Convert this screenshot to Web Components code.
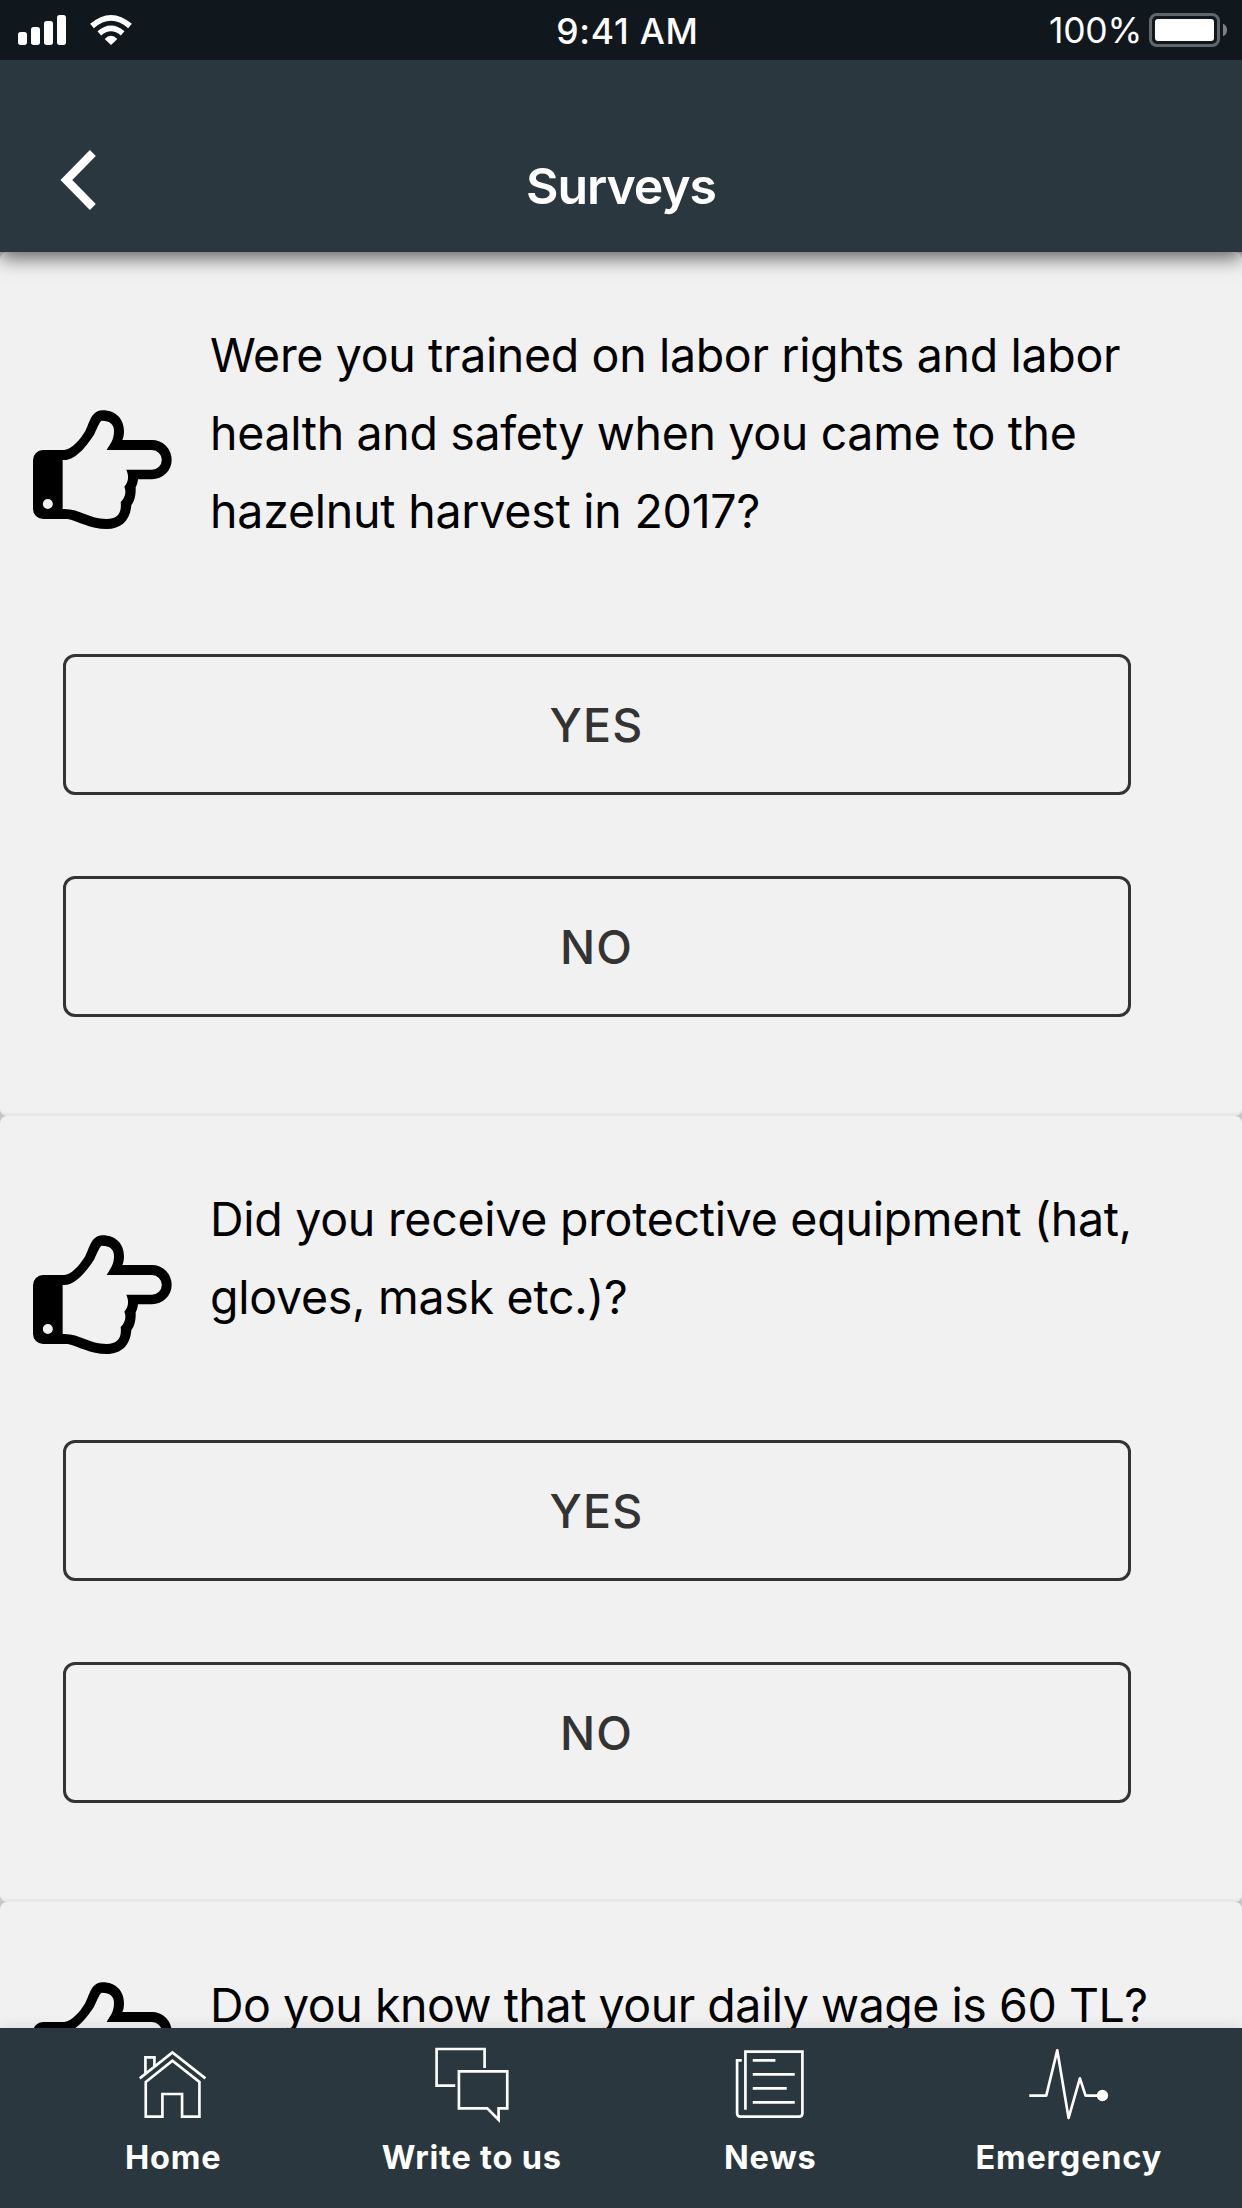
<!DOCTYPE html>
<html lang="en">
<head>
<meta charset="utf-8">
<title>Surveys</title>
<style>
html,body{margin:0;height:100%;overflow:hidden;background:#f1f1f1}
body{font-family:Inter,"Liberation Sans",sans-serif}
</style>
</head>
<body>
<survey-app>
  <status-bar slot="top"></status-bar>
  <nav-header slot="top">Surveys</nav-header>
  <survey-card style="--track:-.34px">Were you trained on labor rights and labor<br>health and safety when you came to the<br><span style="letter-spacing:-.23px">hazelnut harvest in 2017?</span>
    <answer-button slot="answer">YES</answer-button>
    <answer-button slot="answer">NO</answer-button>
  </survey-card>
  <survey-card style="--track:-.27px">Did you receive protective equipment (hat,<br>gloves, mask etc.)?
    <answer-button slot="answer">YES</answer-button>
    <answer-button slot="answer">NO</answer-button>
  </survey-card>
  <survey-card style="--track:-.47px">Do you know that your daily wage is 60 TL?</survey-card>
  <tab-bar slot="bottom">
    <tab-item icon="home">Home</tab-item>
    <tab-item icon="write">Write to us</tab-item>
    <tab-item icon="news">News</tab-item>
    <tab-item icon="pulse">Emergency</tab-item>
  </tab-bar>
</survey-app>
<script>
const define = (name, html) => customElements.define(name, class extends HTMLElement {
  constructor() {
    super();
    this.attachShadow({ mode: 'open' }).innerHTML = html;
  }
});

define('survey-app', `
<style>
:host{display:flex;flex-direction:column;width:1242px;height:2208px;overflow:hidden}
header,footer{flex:none;z-index:1}
header{box-shadow:0 6px 18px rgba(0,0,0,.6)}
footer{box-shadow:0 -3px 12px rgba(0,0,0,.08)}
main{flex:1;min-height:0;overflow:hidden;background:#c6c6c6}
</style>
<header><slot name="top"></slot></header>
<main><slot></slot></main>
<footer><slot name="bottom"></slot></footer>`);

define('status-bar', `
<style>
:host{display:flex;align-items:center;height:60px;background:#10181e;color:#fff;font-size:35.5px;line-height:60px}
div{flex:1;display:flex;align-items:center}
.time{flex:none;font-weight:500;letter-spacing:.75px;padding:2px 0 0 13px;height:58px}
.right{justify-content:flex-end}
.pct{padding-top:2px;letter-spacing:-.3px;margin-right:-4px}
svg{display:block}
</style>
<div><svg width="140" height="60" viewBox="0 0 420 180" fill="#fff">
<rect x="54" y="96" width="27" height="39" rx="8"/><rect x="93" y="81" width="27" height="54" rx="8"/><rect x="132" y="63" width="27" height="72" rx="8"/><rect x="171" y="45" width="27" height="90" rx="8"/>
<path d="M333 135L314 117Q333 98 352 117Z"/>
<path d="M298 100Q333 70 368 100M276 78Q333 29 390 78" fill="none" stroke="#fff" stroke-width="17"/>
</svg></div>
<span class="time">9:41 AM</span>
<div class="right"><span class="pct">100%</span><svg width="104" height="60" viewBox="0 0 312 180">
<rect x="37.500" y="43.500" width="204" height="93" rx="19" fill="none" stroke="#5f676d" stroke-width="9"/>
<rect x="51" y="57" width="177" height="66" rx="9" fill="#fff"/>
<path d="M255 71Q267 76 267 90T255 109Z" fill="#7b8287"/></svg></div>`);

define('nav-header', `
<style>
:host{display:grid;grid-template-columns:1fr auto 1fr;align-items:start;height:192px;background:#2b373f;color:#fff}
svg{display:block;margin:85px 0 0 55px}
h1{margin:96px 0 0;font-size:50px;line-height:60px;font-weight:600;letter-spacing:-1.1px}
</style>
<svg width="45" height="70" viewBox="165 435 135 210"><path d="M278.500 459L199 540L278.500 621" fill="none" stroke="#fff" stroke-width="25"/></svg>
<h1><slot></slot></h1>`);

define('pointing-hand', `
<style>
:host{display:block;width:138px;height:0}
svg{display:block;margin-top:-23px;overflow:visible}
</style>
<svg width="138.333" height="119" viewBox="99 90 415 357"><path fill-rule="evenodd" d="M129 210H193C215 208 240 180 256 153C268 132 273 92 306 91C345 90 372 115 372 153C372 165 370 175 367 180H456A58.500 58.500 0 0 1 456 298H414C413 308 411 315 407 322C408 345 403 365 394 375C391 420 365 447 320 447C270 447 235 424 203 417H129A30 30 0 0 1 99 387V240A30 30 0 0 1 129 210ZM188 240V387C240 385 265 417 320 417C352 417 366 400 362 366C373 355 381 338 373 320C385 305 388 290 379 269H456A29.500 29.500 0 0 0 456 210H320C330 192 342 180 342 153C342 133 330 122 306 122C300 122 295 137 282 164C265 190 230 240 193 240ZM158.500 372A15 15 0 1 0 128.500 372A15 15 0 1 0 158.500 372Z"/></svg>`);

define('answer-button', `
<style>
:host{display:block}
button{display:block;box-sizing:border-box;width:100%;height:141px;padding:2px 1px 0 0;border:3px solid #333;border-radius:12px;background:none;color:#333;font:500 46.500px/133px Inter,"Liberation Sans",sans-serif;letter-spacing:1.1px}
</style>
<button><slot></slot></button>`);

define('survey-card', `
<style>
:host{display:block;box-sizing:border-box;padding:64px 0 96px;background:#f1f1f1;border-bottom:3px solid #e8e8e8;border-radius:7px}
.question{display:flex;align-items:center;gap:39px;padding-left:33px}
p{margin:0;font-size:46.500px;line-height:78px;color:#000;white-space:nowrap;letter-spacing:var(--track,0)}
.answers{display:grid;gap:81px;margin:104px 111px 0 63px}
</style>
<div class="question"><pointing-hand></pointing-hand><p><slot></slot></p></div>
<div class="answers"><slot name="answer"></slot></div>`);

define('tab-bar', `
<style>
:host{display:grid;grid-template-columns:repeat(4,1fr);box-sizing:border-box;height:180px;padding:12px 24px 0;background:#2b373f;color:#fff}
</style><slot></slot>`);

const icons = {
  home: ['384.750 240', '<path d="M420 355L518 277L617 355M437 339V292H464V318M438 366L518 302L599 366V470H547V402H488V470H438Z"/>'],
  write: ['230.250 60', '<path d="M403 144V87H259V197H315M326 154H471V265H445V299L411 265H326Z"/>'],
  news: ['105.750 60', '<path d="M167 269V95H338V280Q338 290 328 290H153Q142 290 142 280V121H156M189 121H257M189 163H315M189 205H291M189 247H315"/>'],
  pulse: ['221.250 60', '<path stroke-linejoin="round" d="M237 227H288L321 91L355 294L389 175L406 227H450"/><circle cx="456.500" cy="226.500" r="17" fill="#fff" stroke="none"/>']
};
customElements.define('tab-item', class extends HTMLElement {
  connectedCallback() {
    if (this.shadowRoot) return;
    const [origin, shape] = icons[this.getAttribute('icon')];
    this.attachShadow({ mode: 'open' }).innerHTML = `
<style>
:host{display:flex;flex-direction:column;align-items:center;font-size:32.500px;line-height:40px;font-weight:700;letter-spacing:.8px;white-space:nowrap}
svg{display:block;margin-bottom:8px}
</style>
<svg width="90" height="90" viewBox="${origin} 270 270" fill="none" stroke="#fff" stroke-width="8">${shape}</svg>
<span><slot></slot></span>`;
  }
});
</script>
</body>
</html>
